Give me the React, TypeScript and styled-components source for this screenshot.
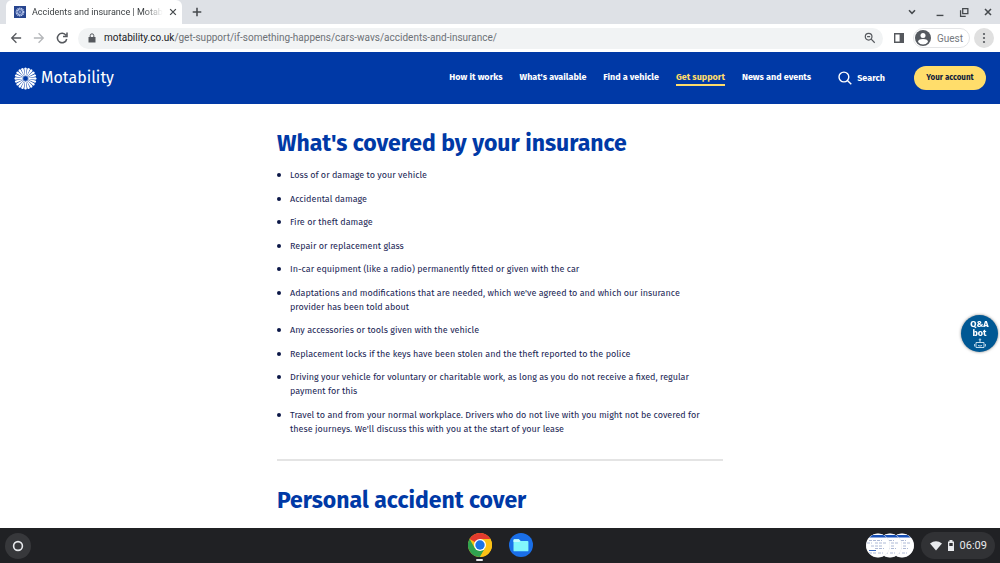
import React from "react";
import styled, { createGlobalStyle } from "styled-components";

const brand = '"Fira Sans", "Noto Sans", sans-serif';
const system = 'Roboto, sans-serif';
const blue = "#0039a6";
const yellow = "#ffdd6b";

const GlobalStyle = createGlobalStyle`
  *, *::before, *::after { box-sizing: border-box; }
  body { margin: 0; background: #fff; }
  button, input { font: inherit; color: inherit; }
  button { border: 0; padding: 0; background: none; cursor: pointer; }
  a { color: inherit; text-decoration: none; }
  svg { display: block; flex: none; }
`;

const Screen = styled.div`
  display: flex;
  flex-direction: column;
  height: 100vh;
  overflow: hidden;
  font-family: ${system};
`;

const TabStrip = styled.div`
  display: flex;
  align-items: center;
  flex: none;
  height: 24px;
  padding: 0 4px 0 6px;
  background: #dee1e6;
  color: #45494d;
`;

const Tab = styled.div`
  display: flex;
  align-items: center;
  gap: 6px;
  width: 176px;
  height: 24px;
  padding: 0 8px;
  border-radius: 6px 6px 0 0;
  background: #fff;
`;

const TabTitle = styled.span`
  flex: 1;
  white-space: nowrap;
  font-size: 9px;
  color: #3c4043;
  mask-image: linear-gradient(to right, #000 85%, transparent);
`;

const IconButton = styled.button<{ $size?: number; $round?: boolean }>`
  display: grid;
  place-items: center;
  flex: none;
  width: ${(p) => p.$size ?? 16}px;
  height: ${(p) => p.$size ?? 16}px;
  border-radius: 50%;
  background: ${(p) => (p.$round ? "#e0e0e0" : "none")};
  &:disabled { color: #b4b6b9; }
`;

const NewTab = styled.div`
  flex: 1;
  padding-left: 7px;
`;

const WindowButtons = styled.div`
  display: flex;
  gap: 8px;
  > :first-child { margin-right: 4px; }
`;

const Toolbar = styled.div`
  display: flex;
  align-items: center;
  flex: none;
  height: 28px;
  padding: 0 6px 0 8px;
  background: #fff;
  color: #55585d;
`;

const History = styled.div`
  display: flex;
  gap: 7px;
  margin-right: 8px;
`;

const AddressBar = styled.div`
  display: flex;
  align-items: center;
  gap: 8px;
  flex: 1;
  height: 21px;
  margin-right: 8px;
  padding: 0 5px 0 10px;
  border-radius: 11px;
  background: #f1f3f4;
`;

const Address = styled.span`
  flex: 1;
  font-size: 10px;
  line-height: 16px;
  color: #6d7176;
  b { font-weight: 400; color: #202124; }
`;

const Profile = styled.button`
  display: flex;
  align-items: center;
  gap: 6px;
  height: 20px;
  margin: 0 4px 0 6px;
  padding: 0 6px 0 1px;
  border: 1px solid #e3e4e6;
  border-radius: 10px;
  font-size: 10px;
  color: #75797e;
`;

const SiteHeader = styled.header`
  display: flex;
  align-items: center;
  justify-content: space-between;
  flex: none;
  height: 52px;
  padding: 0 14px;
  background: ${blue};
  color: #fff;
  font: 700 9px/16px ${brand};
`;

const Logo = styled.a`
  display: flex;
  align-items: center;
  gap: 4px;
  font: 400 16px/24px ${brand};
`;

const HeaderSide = styled.div`
  display: flex;
  align-items: center;
`;

const Nav = styled.nav`
  display: flex;
  gap: 17px;
`;

const NavLink = styled.a<{ $active?: boolean }>`
  border-bottom: 2px solid ${(p) => (p.$active ? yellow : "transparent")};
  color: ${(p) => (p.$active ? yellow : "#fff")};
  line-height: 14px;
`;

const SearchButton = styled.button`
  display: flex;
  align-items: center;
  gap: 5px;
  margin: 0 29px 0 27px;
`;

const AccountButton = styled.button`
  width: 72px;
  height: 24px;
  border-radius: 12px;
  background: ${yellow};
  color: #101b3c;
  font-size: 8px;
`;

const Page = styled.main`
  flex: 1;
  min-height: 0;
  overflow: hidden;
  padding: 22px 20px 0;
  font-family: ${brand};
`;

const Article = styled.article`
  max-width: 446px;
  margin: 0 auto;
`;

const Heading = styled.h2`
  margin: 0;
  font-size: 23px;
  line-height: 34px;
  font-weight: 700;
  color: ${blue};
`;

const CoverList = styled.ul`
  margin: 8px 0 0;
  padding: 0 8px 0 0;
  list-style: none;
`;

const CoverItem = styled.li`
  display: flex;
  gap: 9px;
  margin-bottom: 9px;
  font-size: 9px;
  line-height: 14px;
  color: #1b2655;
  &:nth-child(odd) { margin-bottom: 10px; }
  &::before {
    content: "";
    flex: none;
    width: 4px;
    height: 4px;
    margin-top: 5px;
    border-radius: 50%;
    background: #0b1747;
  }
`;

const Divider = styled.hr`
  height: 2px;
  margin: 23px 0 22px;
  border: 0;
  background: #e4e4e4;
`;

const BotButton = styled.button`
  position: fixed;
  right: 2px;
  top: 315px;
  display: flex;
  flex-direction: column;
  align-items: center;
  width: 37px;
  height: 37px;
  padding-top: 5px;
  border-radius: 50%;
  background: #005894;
  box-shadow: 0 0 3px rgba(0, 0, 0, 0.5);
  color: #fff;
  font: 700 9px/9px ${brand};
`;

const Shelf = styled.footer`
  display: grid;
  grid-template-columns: 1fr auto 1fr;
  align-items: center;
  flex: none;
  height: 35px;
  padding: 0 5px;
  background: #202124;
`;

const Launcher = styled.button`
  display: grid;
  place-items: center;
  width: 26px;
  height: 26px;
  border-radius: 50%;
  background: #37383b;
`;

const Apps = styled.div`
  display: flex;
  gap: 17px;
`;

const AppButton = styled.button<{ $open?: boolean }>`
  height: 35px;
  padding: 5px 0 3px;
  &::after {
    content: "";
    display: block;
    width: 7px;
    height: 2px;
    margin: 2px auto 0;
    border-radius: 1px;
    background: ${(p) => (p.$open ? "#e8eaed" : "transparent")};
  }
`;

const Tray = styled.div`
  display: flex;
  justify-content: flex-end;
  align-items: center;
  gap: 7px;
`;

const Status = styled.button`
  display: flex;
  align-items: center;
  gap: 5px;
  height: 27px;
  padding: 0 8px 0 9px;
  border-radius: 14px;
  background: #313235;
  color: #e8eaed;
  font-size: 11px;
  font-weight: 400;
`;

const covered = [
  "Loss of or damage to your vehicle",
  "Accidental damage",
  "Fire or theft damage",
  "Repair or replacement glass",
  "In-car equipment (like a radio) permanently fitted or given with the car",
  "Adaptations and modifications that are needed, which we've agreed to and which our insurance provider has been told about",
  "Any accessories or tools given with the vehicle",
  "Replacement locks if the keys have been stolen and the theft reported to the police",
  "Driving your vehicle for voluntary or charitable work, as long as you do not receive a fixed, regular payment for this",
  "Travel to and from your normal workplace. Drivers who do not live with you might not be covered for these journeys. We'll discuss this with you at the start of your lease",
];

const links = ["How it works", "What's available", "Find a vehicle", "Get support", "News and events"];

const Line = ({ d, size = 14, width = 1.5 }: { d: string; size?: number; width?: number }) => (
  <svg width={size} height={size} viewBox="0 0 14 14" fill="none" stroke="currentColor" strokeWidth={width}>
    <path d={d} />
  </svg>
);

const Burst = ({ size }: { size: number }) => (
  <svg width={size} height={size} viewBox="-12 -12 24 24" fill="#fff">
    {Array.from({ length: 20 }, (_, i) => (
      <path key={i} transform={`rotate(${i * 18})`} d="M-.4-3L-1.35-10.6Q0-12.6 1.35-10.6L.4-3Z" />
    ))}
    <circle r="2.6" fill="none" stroke="#fff" strokeWidth=".7" opacity=".45" />
  </svg>
);

const Favicon = () => (
  <svg width="12" height="12" viewBox="0 0 12 12">
    <path fill="#27458f" d="M0 0h12v12H0z" />
    <circle cx="6" cy="6" r="3.1" fill="none" stroke="#b9c8ec" strokeWidth="2.6" strokeDasharray="1.1 .4" />
    <circle cx="6" cy="6" r="1.2" fill="#7c93cb" />
  </svg>
);

const Chrome = () => (
  <svg width="24" height="24" viewBox="0 0 24 24">
    <circle cx="12" cy="12" r="12" fill="#fbc116" />
    <path d="M12 12L1.6 6A12 12 0 0 1 22.4 6Z" fill="#e33b2e" />
    <path d="M12 12L6.8 15 1.6 6A12 12 0 0 0 12 24L17.2 15Z" fill="#30a350" />
    <path d="M12 6H22.4A12 12 0 0 1 12 24L17.2 15Z" fill="#fbc116" />
    <circle cx="12" cy="12" r="6" fill="#fff" />
    <circle cx="12" cy="12" r="4.7" fill="#1a73e8" />
  </svg>
);

const Files = () => (
  <svg width="24" height="24" viewBox="0 0 24 24">
    <circle cx="12" cy="12" r="12" fill="#1a6fe8" />
    <path d="M4.5 7.2q0-.9.9-.9h4.4l1.7 1.6h7q.9 0 .9.9v8.6q0 .9-.9.9H5.4q-.9 0-.9-.9Z" fill="#82f6fc" />
    <path d="M4.5 7.2q0-.9.9-.9h4.4l1.7 1.6-1.2 1.2H4.5Z" fill="#c6fbff" />
  </svg>
);

const Previews = () => (
  <svg width="48" height="25" viewBox="0 0 48 25">
    {[36, 24, 12].map((x) => (
      <g key={x}>
        <clipPath id={`preview${x}`}><circle cx={x} cy="12.5" r="11.7" /></clipPath>
        <circle cx={x} cy="12.5" r="12" fill="#e6e8ed" />
        <g clipPath={`url(#preview${x})`}>
          <path fill="#fff" d={`M${x - 12} 0h24v25h-24z`} />
          <path fill="#174fb5" d={`M${x - 12} 2h24v2.5h-24z`} />
          <path
            d={`M${x - 9} 7.5h13M${x - 11} 10h5m3 0h11M${x - 7} 13h12M${x - 3} 15.5h9M${x - 9} 20h7m2 0h5`}
            stroke="#9aa8cb" strokeWidth=".8" strokeDasharray="3 1"
          />
          <path d={`M${x - 9} 17.5h7`} stroke="#3969bd" />
        </g>
      </g>
    ))}
  </svg>
);

export default function App() {
  return (
    <Screen>
      <GlobalStyle />
      <TabStrip>
        <Tab>
          <Favicon />
          <TabTitle>Accidents and insurance | Motab</TabTitle>
          <IconButton $size={8} aria-label="Close tab"><Line size={8} width={2.2} d="M2 2l10 10M12 2L2 12" /></IconButton>
        </Tab>
        <NewTab>
          <IconButton aria-label="New tab"><Line size={12} width={1.8} d="M7 2v10M2 7h10" /></IconButton>
        </NewTab>
        <WindowButtons>
          <IconButton aria-label="Search tabs"><Line size={12} width={1.8} d="M3.5 5L7 8.500 10.500 5" /></IconButton>
          <IconButton aria-label="Minimise"><Line size={12} width={1.6} d="M3 11h8" /></IconButton>
          <IconButton aria-label="Restore"><Line size={12} d="M5.500 3h6v6h-6zM3 5v7h6" /></IconButton>
          <IconButton aria-label="Close window"><Line size={12} width={1.8} d="M3.500 3.500l7 7M10.500 3.500l-7 7" /></IconButton>
        </WindowButtons>
      </TabStrip>

      <Toolbar>
        <History>
          <IconButton aria-label="Back"><Line size={12} d="M13 7H2M7.500 1.500L2 7l5.500 5.500" /></IconButton>
          <IconButton aria-label="Forward" disabled><Line size={12} d="M1 7h11M6.500 1.500L12 7l-5.500 5.500" /></IconButton>
          <IconButton aria-label="Reload"><Line d="M11 4.400A4.700 4.700 0 1 0 11.700 8M12 1.500v3.900H8" /></IconButton>
        </History>
        <AddressBar>
          <svg width="8" height="10" viewBox="0 0 8 10">
            <path d="M.5 4h7v5.500h-7z" fill="currentColor" />
            <path d="M2.200 4V2.600a1.800 1.800 0 0 1 3.600 0V4" fill="none" stroke="currentColor" />
          </svg>
          <Address><b>motability.co.uk</b>/get-support/if-something-happens/cars-wavs/accidents-and-insurance/</Address>
          <IconButton aria-label="Zoom">
            <Line size={12} width={1.400} d="M9.300 5.500a3.900 3.900 0 1 1-7.800 0a3.900 3.900 0 0 1 7.800 0M8.400 8.400L12.500 12.500M3.600 5.500h3.600" />
          </IconButton>
        </AddressBar>
        <IconButton aria-label="Side panel">
          <svg width="10" height="10" viewBox="0 0 10 10" fill="currentColor">
            <path fillRule="evenodd" d="M0 0h10v10H0zM1.400 1.400v7.200h4.200V1.400z" />
          </svg>
        </IconButton>
        <Profile>
          <svg width="16" height="16" viewBox="0 0 16 16">
            <circle cx="8" cy="8" r="8" fill="#55595f" />
            <circle cx="8" cy="5.500" r="2.500" fill="#fff" />
            <path d="M3 12q0-3 5-3t5 3q-2 2.500-5 2.500T3 12" fill="#fff" />
          </svg>
          Guest
        </Profile>
        <IconButton $size={20} $round aria-label="Menu">
          <svg width="4" height="12" viewBox="0 0 4 12" fill="currentColor">
            <circle cx="2" cy="2" r="1.100" /><circle cx="2" cy="6" r="1.100" /><circle cx="2" cy="10" r="1.100" />
          </svg>
        </IconButton>
      </Toolbar>

      <SiteHeader>
        <Logo href="#"><Burst size={23} />Motability</Logo>
        <HeaderSide>
          <Nav>
            {links.map((label) => (
              <NavLink key={label} href="#" $active={label === "Get support"}>{label}</NavLink>
            ))}
          </Nav>
          <SearchButton>
            <Line width={1.400} d="M10.800 6a4.900 4.900 0 1 1-9.800 0a4.900 4.900 0 0 1 9.800 0M9.400 9.400L13.300 13.300" />
            Search
          </SearchButton>
          <AccountButton>Your account</AccountButton>
        </HeaderSide>
      </SiteHeader>

      <Page>
        <Article>
          <Heading>What's covered by your insurance</Heading>
          <CoverList>
            {covered.map((text) => <CoverItem key={text}>{text}</CoverItem>)}
          </CoverList>
          <Divider />
          <Heading>Personal accident cover</Heading>
        </Article>
      </Page>

      <BotButton>
        <span>Q&amp;A</span>
        <span>bot</span>
        <svg width="12" height="11" viewBox="0 0 12 11" fill="none" stroke="#d5e8f5" strokeWidth=".9">
          <path d="M2 4.500h8v5H2zM6 4.500V2M.6 6v2.500M11.400 6v2.500M4 7.500q2 1 4 0" />
          <circle cx="6" cy="1.500" r=".7" />
        </svg>
      </BotButton>

      <Shelf>
        <Launcher aria-label="Launcher">
          <svg width="12" height="12" viewBox="0 0 12 12"><circle cx="6" cy="6" r="4.400" fill="none" stroke="#e8eaed" strokeWidth="1.600" /></svg>
        </Launcher>
        <Apps>
          <AppButton $open aria-label="Chrome"><Chrome /></AppButton>
          <AppButton aria-label="Files"><Files /></AppButton>
        </Apps>
        <Tray>
          <Previews />
          <Status>
            <svg width="12" height="10" viewBox="0 0 12 10"><path d="M0 2.500Q6-2 12 2.500L6 9.500Z" fill="currentColor" /></svg>
            <svg width="8" height="12" viewBox="0 0 8 12"><path fillRule="evenodd" d="M2.500 0h3v1.500H7V11H1V1.500h1.500zM2.300 3v3h3.400V3z" fill="currentColor" /></svg>
            06:09
          </Status>
        </Tray>
      </Shelf>
    </Screen>
  );
}
